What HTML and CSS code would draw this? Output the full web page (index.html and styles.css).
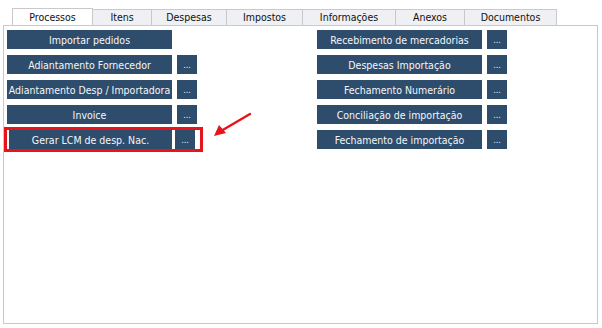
FILE: index.html
```html
<!DOCTYPE html>
<html>
<head>
<meta charset="utf-8">
<link rel="stylesheet" href="styles.css">
</head>
<body>
<div class="tabs">
  <div class="tab active">Processos</div>
  <div class="tab w-itens">Itens</div>
  <div class="tab w-desp">Despesas</div>
  <div class="tab w-imp">Impostos</div>
  <div class="tab w-info">Informações</div>
  <div class="tab w-anex">Anexos</div>
  <div class="tab w-doc">Documentos</div>
</div>
<div class="panel">
  <div class="col">
    <div class="row"><button class="btn">Importar pedidos</button></div>
    <div class="row"><button class="btn">Adiantamento Fornecedor</button><button class="dots">...</button></div>
    <div class="row"><button class="btn">Adiantamento Desp / Importadora</button><button class="dots">...</button></div>
    <div class="row"><button class="btn">Invoice</button><button class="dots">...</button></div>
    <div class="row highlighted"><button class="btn">Gerar LCM de desp. Nac.</button><button class="dots">...</button>
      <div class="redbox"></div>
      <svg class="arrow" width="40" height="26" viewBox="0 0 40 26"><line x1="37" y1="2" x2="8" y2="19" stroke="#e8141b" stroke-width="2.4" stroke-linecap="round"/><polygon points="1,24 6,13 13,21" fill="#e8141b"/></svg>
    </div>
  </div>
  <div class="col">
    <div class="row"><button class="btn">Recebimento de mercadorias</button><button class="dots">...</button></div>
    <div class="row"><button class="btn">Despesas Importação</button><button class="dots">...</button></div>
    <div class="row"><button class="btn">Fechamento Numerário</button><button class="dots">...</button></div>
    <div class="row"><button class="btn">Conciliação de importação</button><button class="dots">...</button></div>
    <div class="row"><button class="btn">Fechamento de importação</button><button class="dots">...</button></div>
  </div>
</div>
</body>
</html>
```
FILE: styles.css
```css
html, body {
  margin: 0;
  padding: 0;
  background: #fff;
  font-family: "DejaVu Sans Condensed", "Liberation Sans", sans-serif;
  font-size: 10.5px;
}
.tabs {
  display: flex;
  align-items: flex-end;
  margin-top: 9px;
  padding-left: 12px;
  height: 16px;
  position: relative;
  z-index: 2;
}
.tab {
  box-sizing: border-box;
  height: 16px;
  line-height: 14px;
  text-align: center;
  background: #eef0f3;
  border: 1px solid #c9c9c9;
  border-left: none;
  border-bottom: none;
  color: #111;
  font-size: 10.5px;
}
.tab.active {
  width: 81px;
  height: 17px;
  background: #fff;
  border-left: 1px solid #c9c9c9;
  line-height: 16px;
}
.w-itens { width: 59px; }
.w-desp { width: 75px; }
.w-imp { width: 76px; }
.w-info { width: 93px; }
.w-anex { width: 69px; }
.w-doc { width: 92px; }
.panel {
  box-sizing: border-box;
  margin-left: 3px;
  width: 595px;
  height: 299px;
  border: 1px solid #c9c9c9;
  padding: 4px 3px;
  display: flex;
  gap: 120px;
}
.col {
  display: flex;
  flex-direction: column;
  gap: 6px;
  width: 190px;
}
.row {
  display: flex;
  gap: 5px;
  height: 19px;
  position: relative;
}
button {
  font-family: inherit;
  border: none;
  margin: 0;
  padding: 0;
  background: #2e4c6c;
  color: #f4f6f8;
  font-size: 10.5px;
  height: 19px;
  white-space: nowrap;
}
.btn { width: 165px; }
.dots { width: 20px; font-size: 9px; }
.highlighted .btn { width: 163px; margin-left: 2px; }
.highlighted .dots { margin-left: -2px; }
.redbox {
  position: absolute;
  left: -3px;
  top: -3px;
  width: 199px;
  height: 25px;
  box-sizing: border-box;
  border: 3px solid #e8141b;
}
.arrow {
  position: absolute;
  left: 206px;
  top: -18px;
}
```
